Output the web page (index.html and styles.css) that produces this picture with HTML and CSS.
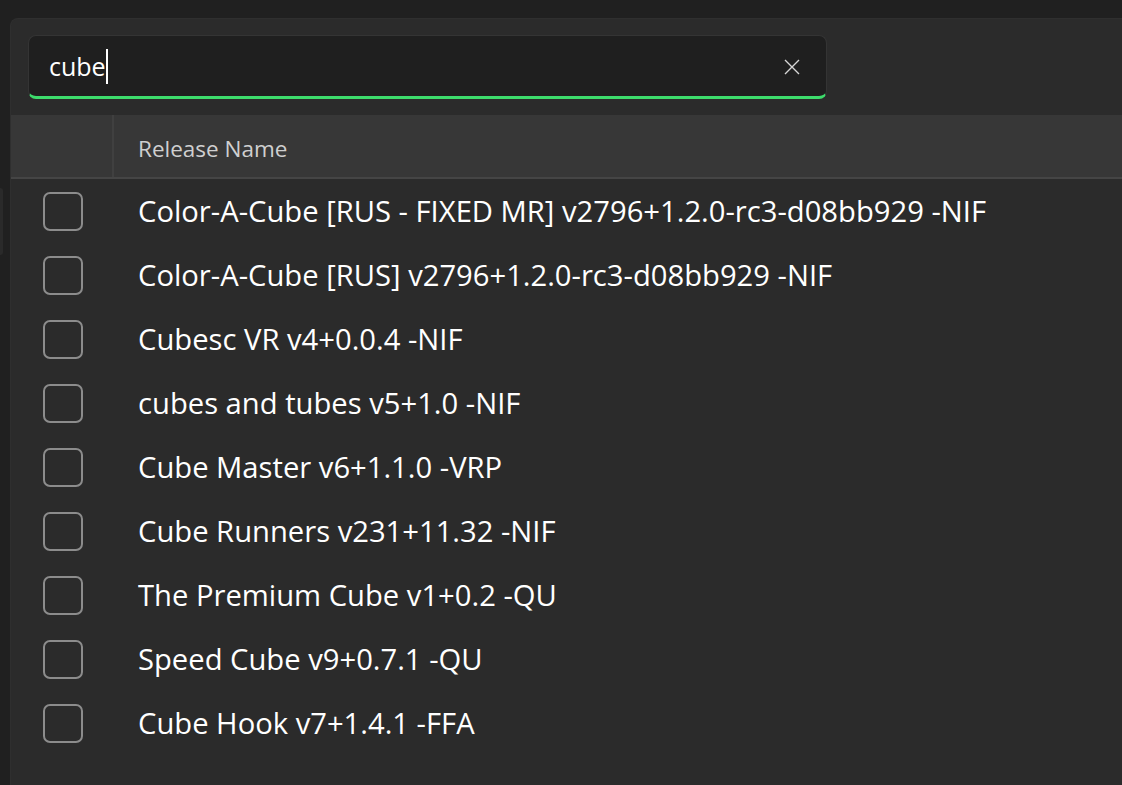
FILE: index.html
```html
<!DOCTYPE html>
<html lang="en">
<head>
<meta charset="utf-8">
<title>Release search</title>
<link rel="stylesheet" href="styles.css">
</head>
<body>
<div class="app">
  <div class="titlebar"></div>
  <div class="main">
    <aside class="rail"><div class="rail-tab"></div></aside>
    <section class="panel">
      <div class="search-wrap">
        <div class="search">
          <span class="search-text">cube<span class="caret"></span></span>
          <button class="clear" aria-label="Clear">
            <svg width="16" height="16" viewBox="0 0 16 16"><path d="M1 1L15 15M15 1L1 15" stroke="#d6d6d6" stroke-width="1.4" fill="none"/></svg>
          </button>
        </div>
      </div>
      <div class="table">
        <div class="thead">
          <div class="th-check"></div>
          <div class="th-name">Release Name</div>
        </div>
        <div class="tbody">
          <div class="row"><div class="cell-check"><span class="box"></span></div><div class="cell-name">Color-A-Cube [RUS - FIXED MR] v2796+1.2.0-rc3-d08bb929 -NIF</div></div>
          <div class="row"><div class="cell-check"><span class="box"></span></div><div class="cell-name">Color-A-Cube [RUS] v2796+1.2.0-rc3-d08bb929 -NIF</div></div>
          <div class="row"><div class="cell-check"><span class="box"></span></div><div class="cell-name">Cubesc VR v4+0.0.4 -NIF</div></div>
          <div class="row"><div class="cell-check"><span class="box"></span></div><div class="cell-name">cubes and tubes v5+1.0 -NIF</div></div>
          <div class="row"><div class="cell-check"><span class="box"></span></div><div class="cell-name">Cube Master v6+1.1.0 -VRP</div></div>
          <div class="row"><div class="cell-check"><span class="box"></span></div><div class="cell-name">Cube Runners v231+11.32 -NIF</div></div>
          <div class="row"><div class="cell-check"><span class="box"></span></div><div class="cell-name">The Premium Cube v1+0.2 -QU</div></div>
          <div class="row"><div class="cell-check"><span class="box"></span></div><div class="cell-name">Speed Cube v9+0.7.1 -QU</div></div>
          <div class="row"><div class="cell-check"><span class="box"></span></div><div class="cell-name">Cube Hook v7+1.4.1 -FFA</div></div>
        </div>
      </div>
    </section>
  </div>
</div>
</body>
</html>
```
FILE: styles.css
```css
* { box-sizing: border-box; }

html, body {
  margin: 0;
  height: 100%;
  background: #202020;
  overflow: hidden;
}

body {
  font-family: "Open Sans", "Noto Sans", sans-serif;
  color: #ffffff;
}

.app {
  display: flex;
  flex-direction: column;
  height: 785px;
}

.titlebar {
  height: 18px;
  background: #202020;
  flex: none;
}

.main {
  flex: 1;
  display: flex;
  min-height: 0;
}

.rail {
  width: 10px;
  flex: none;
  background: #202020;
  padding-top: 170px;
}

.rail-tab {
  width: 3px;
  height: 67px;
  background: #2a2a2a;
  border-radius: 0 4px 4px 0;
}

.panel {
  flex: 1;
  background: #2b2b2b;
  border-top-left-radius: 8px;
  border-left: 1px solid #2f2f2f;
  border-top: 1px solid #2f2f2f;
  display: flex;
  flex-direction: column;
}

.search-wrap {
  padding: 16px 0 16px 17px;
}

.search {
  width: 799px;
  height: 64px;
  background: #1f1f1f;
  border: 1px solid #343434;
  border-bottom: 3px solid #3ddc6c;
  border-radius: 8px;
  display: flex;
  align-items: center;
  padding: 0 20px 0 20px;
}

.search-text {
  flex: 1;
  font-size: 25px;
  line-height: 32px;
  color: #ffffff;
  display: flex;
  align-items: center;
}

.caret {
  display: inline-block;
  width: 2px;
  height: 35px;
  background: #ffffff;
  margin-left: 0;
}

.clear {
  border: 0;
  background: none;
  padding: 0;
  width: 16px;
  height: 16px;
  display: flex;
  margin-right: 6px;
  margin-top: 1px;
}

.table {
  flex: 1;
  display: flex;
  flex-direction: column;
}

.thead {
  display: flex;
  height: 64px;
  background: #373737;
  border-bottom: 2px solid #454545;
}

.th-check {
  width: 103px;
  border-right: 2px solid #404040;
}

.th-name {
  padding-left: 24px;
  padding-top: 4px;
  font-size: 22.5px;
  color: #cfcfcf;
  display: flex;
  align-items: center;
}

.row {
  display: flex;
  align-items: center;
  height: 64px;
}

.cell-check {
  width: 105px;
  padding-left: 32px;
  display: flex;
  align-items: center;
}

.box {
  width: 40px;
  height: 39px;
  border: 2px solid #8c8c8c;
  border-radius: 7px;
  background: #2b2b2b;
}

.cell-name {
  padding-left: 22px;
  font-size: 29.2px;
  line-height: 40px;
  color: #ffffff;
  white-space: nowrap;
}
```
